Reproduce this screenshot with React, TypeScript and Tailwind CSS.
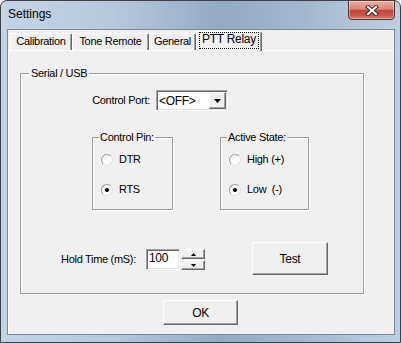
import React from 'react';

const raised =
  'border border-t-white border-l-white border-r-[#696969] border-b-[#696969] shadow-[inset_-1px_-1px_#a0a0a0] bg-[#f0f0f0]';
const sunken =
  'border border-t-[#a0a0a0] border-l-[#a0a0a0] border-r-white border-b-white shadow-[inset_1px_1px_#696969,inset_-1px_-1px_#e3e3e3] bg-white';
const etched = 'border border-[#a0a0a0] shadow-[inset_1px_1px_#ffffff,1px_1px_#ffffff]';

function Radio({ label, checked }: { label: string; checked?: boolean }) {
  return (
    <div className="flex items-center gap-[6px] h-[13px]">
      <span className="w-[12px] h-[12px] rounded-full border border-t-[#9a9a9a] border-l-[#9a9a9a] border-r-[#e0e0e0] border-b-[#e0e0e0] bg-white flex items-center justify-center">
        {checked && <span className="w-[4px] h-[4px] rounded-full bg-black" />}
      </span>
      <span className="leading-[13px] whitespace-pre">{label}</span>
    </div>
  );
}

function Tab({ label, width }: { label: string; width: string }) {
  return (
    <div
      className={`${width} h-[17px] border-t border-l border-white border-r border-r-[#696969] shadow-[inset_-1px_0_#a0a0a0] rounded-t-[2px] pt-[1px] text-center leading-[13px]`}
    >
      {label}
    </div>
  );
}

export default function App() {
  return (
    <div className="w-[401px] h-[343px] bg-white font-['Liberation_Sans',Arial,sans-serif] text-black">
      <div className="w-[401px] h-[343px] flex flex-col border border-[#3c4148] rounded-t-[7px] bg-[linear-gradient(90deg,#c3d4e7_0%,#b6c8dd_28%,#93aac5_55%,#a2b7cf_75%,#bdcfe3_100%)]">
        {/* Title bar */}
        <div className="h-[28px] shrink-0 flex items-start justify-between">
          <span className="pl-[7px] pt-[6px] text-[12px] leading-[15px]">Settings</span>
          <div className="mr-[5px] -mt-[1px] w-[47px] h-[20px] rounded-b-[4px] border border-[#5c3430] bg-[linear-gradient(180deg,#e9b0a4_0%,#d98576_45%,#c4473a_52%,#c9574a_80%,#d8806f_100%)] shadow-[inset_0_0_0_1px_rgba(255,255,255,0.35)] flex items-center justify-center">
            <svg width="14" height="11" viewBox="0 0 14 11">
              <path d="M3 2 L11 9 M11 2 L3 9" stroke="#3a2a28" strokeWidth="4" strokeLinecap="square" />
              <path d="M3 2 L11 9 M11 2 L3 9" stroke="#ffffff" strokeWidth="2" strokeLinecap="square" />
            </svg>
          </div>
        </div>

        {/* Client area */}
        <div className="ml-[6px] mr-[5px] mb-[7px] h-[306px] border border-[#7b889a] bg-[#f0f0f0] flex flex-col text-[11px] tracking-[-0.3px]">
          {/* Tabs */}
          <div className="h-[20px] shrink-0 flex items-end pl-[2px]">
            <Tab label="Calibration" width="w-[62px]" />
            <Tab label="Tone Remote" width="w-[77px]" />
            <Tab label="General" width="w-[47px]" />
            <div className="relative z-10 w-[66px] h-[20px] -mb-[1px] bg-[#f0f0f0] border-t border-l border-white border-r border-r-[#696969] shadow-[inset_-1px_0_#a0a0a0] rounded-t-[2px] px-[2px] pb-[2px]">
              <div className="h-[17px] border border-dotted border-black text-center text-[12px] leading-[13px]">
                PTT Relay
              </div>
            </div>
          </div>

          {/* Panel */}
          <div className="flex-1 border-t border-l border-white">
            <fieldset className={`ml-[11px] mt-[16px] w-[344px] h-[227px] ${etched}`}>
              <legend className="ml-[8px] px-[2px] leading-[13px] bg-[#f0f0f0]">Serial / USB</legend>

              {/* Control Port */}
              <div className="flex items-center mt-[10px]">
                <span className="w-[135px] pr-[6px] text-right">Control Port:</span>
                <div className={`w-[72px] h-[21px] ${sunken} flex items-center`}>
                  <span className="pl-[2px] text-[12px]">&lt;OFF&gt;</span>
                  <div className={`ml-auto mr-[1px] w-[17px] h-[17px] ${raised} flex items-center justify-center`}>
                    <svg width="7" height="4" viewBox="0 0 7 4">
                      <path d="M0 0 H7 L3.5 4 Z" fill="#000" />
                    </svg>
                  </div>
                </div>
              </div>

              {/* Pin / State */}
              <div className="flex pl-[71px] gap-[47px] mt-[20px]">
                <fieldset className={`w-[81px] h-[79px] ${etched}`}>
                  <legend className="ml-[6px] px-[1px] leading-[13px] bg-[#f0f0f0]">Control Pin:</legend>
                  <div className="pl-[8px] pt-[9px] flex flex-col gap-[17px]">
                    <Radio label="DTR" />
                    <Radio label="RTS" checked />
                  </div>
                </fieldset>
                <fieldset className={`w-[89px] h-[79px] ${etched}`}>
                  <legend className="ml-[6px] px-[1px] leading-[13px] bg-[#f0f0f0]">Active State:</legend>
                  <div className="pl-[8px] pt-[9px] flex flex-col gap-[17px]">
                    <Radio label="High (+)" />
                    <Radio label="Low  (-)" checked />
                  </div>
                </fieldset>
              </div>

              {/* Hold time / Test */}
              <div className="flex items-start mt-[32px]">
                <span className="mt-[7px] w-[125px] pr-[10px] text-right leading-[21px]">Hold Time (mS):</span>
                <div className={`mt-[7px] w-[34px] h-[21px] ${sunken} pl-[2px] text-[12px] leading-[17px]`}>100</div>
                <div className="mt-[7px] ml-[1px] w-[24px] flex flex-col gap-[1px]">
                  <div className={`h-[10px] ${raised} flex items-center justify-center`}>
                    <svg width="5" height="3" viewBox="0 0 5 3">
                      <path d="M2.5 0 L5 3 H0 Z" fill="#000" />
                    </svg>
                  </div>
                  <div className={`h-[10px] ${raised} flex items-center justify-center`}>
                    <svg width="5" height="3" viewBox="0 0 5 3">
                      <path d="M0 0 H5 L2.5 3 Z" fill="#000" />
                    </svg>
                  </div>
                </div>
                <button className={`ml-[47px] w-[76px] h-[33px] ${raised} text-[12px]`}>Test</button>
              </div>
            </fieldset>

            <button className={`ml-[154px] mt-[6px] w-[75px] h-[25px] ${raised} text-[12px]`}>OK</button>
          </div>
        </div>
      </div>
    </div>
  );
}
